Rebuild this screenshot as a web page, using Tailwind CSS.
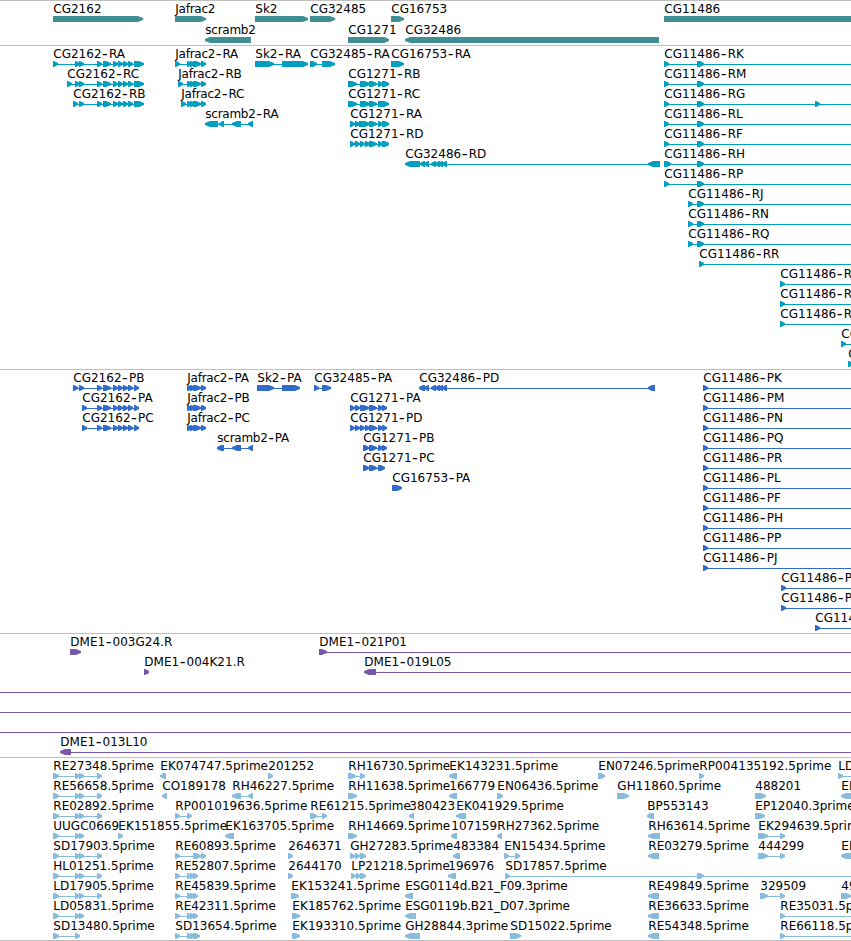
<!DOCTYPE html>
<html lang="en">
<head>
<meta charset="utf-8">
<title>Genome tracks</title>
<script src="https://cdn.jsdelivr.net/npm/@tailwindcss/browser@4"></script>
</head>
<body class="bg-white overflow-hidden">
<main id="tracks" class="flex flex-col w-[851px] h-[941px] overflow-hidden border-b border-[#c0c0c0]"></main>
<script>
// Feature: [label, strand, "start-end ..." blocks]
const tailA = '97-102 103-111 113-118 118-123 123-128 128-133 ';
const jaf = '187-192 190-195 193-201 201-206';
const re = '53-59 75-80 79-84 97-102';
const cg = (names, b) => names.split(' ').map(n => [['CG11486-' + n, '>', b]]);

const geneRows = [
  [['CG2162','>','53-143'],['Jafrac2','>','175-206'],['Sk2','>','255-308'],['CG32485','>','310-335'],['CG16753','>','391-404'],['CG11486','>','664-880']],
  [['scramb2','<','205-251'],['CG1271','>','348-389'],['CG32486','<','405-659']]
];

const rna = [];
for (let i = 0; i < 16; i++) rna.push([]);
rna[0].push(['CG2162-RA','>','53-58 75-80 79-84 '+tailA+'134-144'],['Jafrac2-RA','>','175-180 '+jaf],['Sk2-RA','>','255-274 282-308'],['CG32485-RA','>','310-317 322-335'],['CG16753-RA','>','391-404']);
rna[1].push(['CG2162-RC','>','67-72 75-80 79-84 '+tailA+'134-144'],['Jafrac2-RB','>','178-183 '+jaf],['CG1271-RB','>','348-357 360-370 369-377 378-383 382-389']);
rna[2].push(['CG2162-RB','>','73-78 79-84 '+tailA+'134-144'],['Jafrac2-RC','>','181-186 '+jaf],['CG1271-RC','>','348-357 360-370 369-377 378-389']);
rna[3].push(['scramb2-RA','<','205-218 219-224 232-241 248-253'],['CG1271-RA','>','350-355 355-360 359-370 369-377 378-383 382-389']);
rna[4].push(['CG1271-RD','>','350-355 355-360 360-365 365-370 369-377 378-383 382-389']);
rna[5].push(['CG32486-RD','<','405-420 420-425 424-429 431-436 435-440 438-443 442-447 648-660']);
['RK','RM','RG','RL','RF','RH','RP'].forEach((n, i) =>
  rna[i].push(['CG11486-'+n,'>',(n === 'RH' ? '664-671' : '664-669')+' 697-704'+(n === 'RG' ? ' 815-820' : '')+' 880-890']));
['RJ','RN','RQ'].forEach((n, i) => rna[7+i].push(['CG11486-'+n,'>','688-693 697-704 880-890']));
rna[10].push(['CG11486-RR','>','699-704 880-890']);
[11,12,13].forEach(i => rna[i].push(['CG11486-R','>','780-785 880-890']));
rna[14].push(['CG','>','841-846 880-890']);
rna[15].push(['C','>','848-853 880-890']);

const prot = cg('PK PM PN PQ PR PL PF PH PP PJ', '703-708 880-890');
prot.push([['CG11486-P','>','781-786 880-890']],[['CG11486-P','>','781-786 880-890']],[['CG114','>','815-820 880-890']]);
prot[0].push(['CG2162-PB','>','73-78 79-84 '+tailA+'134-139'],['Jafrac2-PA','>',jaf],['Sk2-PA','>','257-274 282-300'],['CG32485-PA','>','314-319 322-331'],['CG32486-PD','<','419-425 424-429 431-436 435-440 438-443 442-447 648-655']);
prot[1].push(['CG2162-PA','>','82-87 '+tailA+'134-139'],['Jafrac2-PB','>',jaf],['CG1271-PA','>','350-355 355-360 360-369 369-377 378-383 382-387']);
prot[2].push(['CG2162-PC','>','82-87 '+tailA+'134-139'],['Jafrac2-PC','>',jaf],['CG1271-PD','>','350-355 355-360 360-365 365-370 369-377 378-383 382-387']);
prot[3].push(['scramb2-PA','<','217-224 232-241 248-253'],['CG1271-PB','>','363-369 369-377 378-383 382-387']);
prot[4].push(['CG1271-PC','>','363-369 369-377 378-385']);
prot[5].push(['CG16753-PA','>','392-402']);

const bac = [
  [['DME1-003G24.R','>','70-81'],['DME1-021P01','>','319-327 880-890']],
  [['DME1-004K21.R','>','144-149'],['DME1-019L05','<','364-376 880-890']],
  [['','>','-20--10 880-890']],[['','>','-20--10 880-890']],[['','>','-20--10 880-890']],
  [['DME1-013L10','<','60-71 880-890']]
];

const est = [
  [['RE27348.5prime','>',re],['EK074747.5prime','<','160-166'],['201252','>','268-273'],['RH16730.5prime','>','348-356 360-365'],['EK143231.5prime','<','449-457'],['EN07246.5prime','>','598-605'],['RP004135192.5prime','>','699-704'],['LD','>','838-843 880-890']],
  [['RE56658.5prime','>',re],['CO189178','<','162-167'],['RH46227.5prime','<','232-241 248-253'],['RH11638.5prime','>','348-357'],['166779','<','449-457'],['EN06436.5prime','>','497-503'],['GH11860.5prime','>','617-629'],['488201','>','755-766'],['EF','<','841-880']],
  [['RE02892.5prime','>',re],['RP001019636.5prime','>','175-180 187-192'],['RE61215.5prime','>','310-317 322-327'],['380423','<','409-414'],['EK041929.5prime','<','456-466'],['BP553143','<','647-654'],['EP12040.3prime','>','755-765']],
  [['UUGC0669','>','53-59 75-80 79-84'],['EK151855.5prime','>','118-123'],['EK163705.5prime','<','225-234'],['RH14669.5prime','>','348-357'],['107159','<','451-457'],['RH27362.5prime','<','497-502'],['RH63614.5prime','<','648-660'],['EK294639.5prim','>','758-768 780-785']],
  [['SD17903.5prime','>',re],['RE60893.5prime','>','175-180 193-201 201-206'],['2646371','>','288-293'],['GH27283.5prime','>','350-355 355-360 360-366'],['483384','<','453-460'],['EN15434.5prime','>','504-509 515-520'],['RE03279.5prime','<','648-659'],['444299','>','758-768 780-785'],['EF','<','841-880']],
  [['HL01251.5prime','>',re],['RE52807.5prime','>','175-180 187-192 190-195 193-198'],['2644170','>','288-293'],['LP21218.5prime','>','351-356 356-361 360-366'],['196976','<','448-456'],['SD17857.5prime','>','505-510 697-704 880-890']],
  [['LD17905.5prime','>',re],['RE45839.5prime','>','175-180 187-192 190-195 193-198'],['EK153241.5prime','>','291-299'],['ESG0114d.B21_F09.3prime','<','405-413'],['RE49849.5prime','<','648-659'],['329509','>','760-768 780-785'],['49','>','841-851 880-890']],
  [['LD05831.5prime','>','53-59 75-80 79-84'],['RE42311.5prime','>','175-180 187-192 190-195 193-198'],['EK185762.5prime','>','292-300'],['ESG0119b.B21_D07.3prime','<','405-416'],['RE36633.5prime','<','648-659'],['RE35031.5p','>','780-785 880-890']],
  [['SD13480.5prime','>','53-59 75-80'],['SD13654.5prime','>','175-180 187-192 190-195 193-200'],['EK193310.5prime','>','292-300'],['GH28844.3prime','<','405-420'],['SD15022.5prime','>','510-521'],['RE54348.5prime','<','648-659'],['RE66118.5p','>','780-785 880-890']]
];

// A block is a bar whose leading end tapers to a blunt tip
const block = (a, b, dir) => {
  const h = Math.min(b - a > 7 ? 6 : 5, b - a);
  return dir === '>'
    ? `<path d="M${a} 16H${b-h+1}L${b} 18V20L${b-h+1} 22H${a}Z"/>`
    : `<path d="M${b} 16H${a+h-1}L${a} 18V20L${a+h-1} 22H${b}Z"/>`;
};
const text = (label, x) => {
  const track = /^(scramb|Jafrac)/.test(label) ? 'tracking-[-0.25px]'
    : /^ESG/.test(label) ? 'tracking-[-0.1px]'
    : /^(GH11|RP0|EK1[48569])/.test(label) ? 'tracking-[0.08px]' : '';
  const body = label.replace(/^([^-]+)-(.+)$/, '$1<tspan dx="0.6" dy="0.9" class="text-[16px]">-</tspan><tspan dx="1.1" dy="-0.9">$2</tspan>');
  return `<text x="${x + 0.3}" y="13" class="fill-black ${track}">${body}</text>`;
};
const feature = ([label, dir, spec]) => {
  const bs = spec.split(' ').map(s => s.match(/^(-?\d+)-(-?\d+)$/).slice(1).map(Number));
  const x0 = bs[0][0], x1 = bs[bs.length-1][1];
  let s = bs.length > 1 ? `<rect x="${x0+1}" y="19" width="${x1-x0-2}" height="1"/>` : '';
  s += bs.map(([a, b]) => block(a, b, dir)).join('');
  if (label) s += text(label, x0);
  return s;
};
const row = (fs, cls) => `<svg class="block w-full shrink-0 overflow-visible ${cls}">${fs.map(feature).join('')}</svg>`;
const track = (rows, color, height, rowCls) =>
  `<section class="flex flex-col shrink-0 border-t border-[#c0c0c0] ${height}"><div class="-mt-px flex flex-col font-['DejaVu_Sans',sans-serif] text-[12px] ${color}">${rows.map(r => row(r, rowCls)).join('')}</div></section>`;

document.getElementById('tracks').innerHTML =
  track(geneRows, 'fill-[#408f94]', 'h-[45px]', 'h-[21px]') +
  track(rna, 'fill-[#009fbf]', 'h-[324px]', 'h-5') +
  track(prot, 'fill-[#316ccb]', 'h-[264px]', 'h-5') +
  track(bac, 'fill-[#7758a8]', 'h-[124px]', 'h-5') +
  track(est, 'fill-[#88bbdc]', 'h-[183px]', 'h-5');
</script>
</body>
</html>
